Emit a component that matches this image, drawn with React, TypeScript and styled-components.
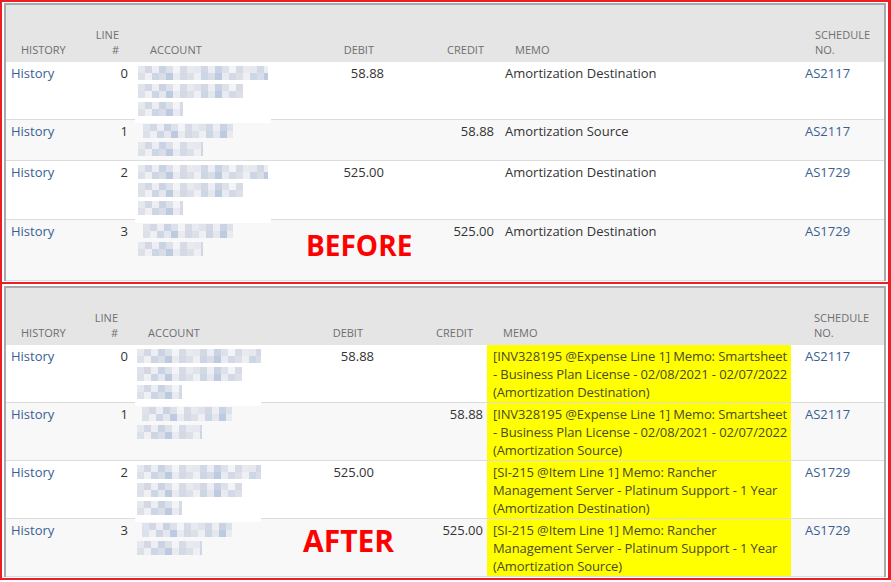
import React from 'react';
import styled, { createGlobalStyle } from 'styled-components';

const Global = createGlobalStyle`
  *, *::before, *::after { box-sizing: border-box; }
  html, body { margin: 0; padding: 0; background: #fff; }
  body { font-family: "Open Sans", "Liberation Sans", sans-serif; }
`;

const Page = styled.div`
  width: 891px;
  height: 582px;
  display: flex;
  flex-direction: column;
  overflow: hidden;
  background: #fff;
`;

const Panel = styled.section<{ $first?: boolean }>`
  position: relative;
  border: solid #ee1c24;
  border-width: ${(p) => (p.$first ? '2px 3px 2px 2px' : '0 3px 2px 2px')};
  padding: ${(p) => (p.$first ? '1px 2px 1px 2px' : '2px 2px 1px 2px')};
`;

const Frame = styled.div`
  border: 2px solid #a9a9a9;
  border-bottom: 0;
`;

const HeaderRow = styled.div<{ $cols: string }>`
  display: grid;
  grid-template-columns: ${(p) => p.$cols};
  height: 57px;
  background: #e5e5e5;
`;

const HeadCell = styled.div<{ $align: string; $pad: number }>`
  display: flex;
  flex-direction: column;
  justify-content: flex-end;
  align-items: ${(p) => (p.$align === 'right' ? 'flex-end' : 'flex-start')};
  text-align: ${(p) => p.$align};
  padding: 0 ${(p) => p.$pad}px 5px;
  font-size: 11px;
  line-height: 15px;
  color: #6f6f6f;
  text-transform: uppercase;
  white-space: nowrap;
`;

const Row = styled.div<{ $cols: string; $alt: boolean; $h: number }>`
  display: grid;
  grid-template-columns: ${(p) => p.$cols};
  min-height: ${(p) => p.$h}px;
  background: ${(p) => (p.$alt ? '#f8f8f8' : '#ffffff')};
  border-bottom: 1px solid #dcdcdc;
`;

const Cell = styled.div<{ $align: string; $pad: number; $mark?: boolean }>`
  padding: 2px ${(p) => p.$pad}px 1px;
  font-size: 13px;
  line-height: 18px;
  text-align: ${(p) => p.$align};
  white-space: nowrap;
  background: ${(p) => (p.$mark ? '#ffff00' : 'transparent')};
  color: ${(p) => (p.$mark ? '#4a4a2a' : '#333333')};
  letter-spacing: ${(p) => (p.$mark ? '-0.1px' : '0')};
`;

const AccountCell = styled.div<{ $pad: number; $paper: boolean }>`
  position: relative;
  z-index: 1;
  margin: 0 4px ${(p) => (p.$paper ? '-4px' : '0')} 2px;
  padding: 2px 0 1px ${(p) => p.$pad - 2}px;
  background: ${(p) => (p.$paper ? '#ffffff' : 'transparent')};
  display: flex;
  flex-direction: column;
`;

const LinkText = styled.span`
  color: #3a5e93;
`;

const MosaicLine = styled.div`
  height: 18px;
  display: flex;
  align-items: center;
`;

const Strip = styled.div<{ $w: number; $off: number; $v: number }>`
  width: ${(p) => p.$w}px;
  margin-left: ${(p) => p.$off}px;
  height: 14px;
  filter: blur(0.6px);
  background:
    repeating-linear-gradient(
      90deg,
      ${(p) => (p.$v ? '#dfe3eb' : '#e6e8ef')} 0 7px,
      #d3d8e4 7px 14px,
      #eceef3 14px 21px,
      #c9d3e3 21px 28px,
      #dde1ea 28px 35px,
      #f3f4f7 35px 42px,
      #d6dbe6 42px 49px,
      #e8eaf0 49px 56px
    ) 0 0 / 100% 7px no-repeat,
    repeating-linear-gradient(
      90deg,
      #dce0e9 0 7px,
      #eef0f4 7px 14px,
      #cdd6e5 14px 21px,
      ${(p) => (p.$v ? '#e4e7ee' : '#d9dde7')} 21px 28px,
      #bccbe0 28px 35px,
      #e9ebf1 35px 42px,
      #d4d9e5 42px 49px
    ) 0 7px / 100% 7px no-repeat;
`;

const Stamp = styled.div<{ $top: number; $left: number; $size: number }>`
  position: absolute;
  z-index: 2;
  top: ${(p) => p.$top}px;
  left: ${(p) => p.$left}px;
  font-family: "Open Sans", "Liberation Sans", sans-serif;
  font-weight: 700;
  font-size: ${(p) => p.$size}px;
  line-height: 1;
  color: #ff0000;
  pointer-events: none;
`;

type Col = { key: string; head: string[]; align: 'left' | 'right'; w: number; pad: number; hpad: number };

type Line = {
  line: number;
  acct: [number, number][];
  debit?: string;
  credit?: string;
  memo: string[];
  sched: string;
  h: number;
};

const topCols: Col[] = [
  { key: 'history', head: ['History'], align: 'left', w: 84, pad: 5, hpad: 15 },
  { key: 'line', head: ['Line', '#'], align: 'right', w: 43, pad: 5, hpad: 14 },
  { key: 'account', head: ['Account'], align: 'left', w: 142, pad: 5, hpad: 17 },
  { key: 'debit', head: ['Debit'], align: 'right', w: 114, pad: 5, hpad: 15 },
  { key: 'credit', head: ['Credit'], align: 'right', w: 110, pad: 5, hpad: 15 },
  { key: 'memo', head: ['Memo'], align: 'left', w: 301, pad: 6, hpad: 16 },
  { key: 'sched', head: ['Schedule', 'No.'], align: 'left', w: 84, pad: 5, hpad: 15 },
];

const bottomCols: Col[] = [
  { key: 'history', head: ['History'], align: 'left', w: 84, pad: 5, hpad: 15 },
  { key: 'line', head: ['Line', '#'], align: 'right', w: 43, pad: 5, hpad: 15 },
  { key: 'account', head: ['Account'], align: 'left', w: 132, pad: 4, hpad: 15 },
  { key: 'debit', head: ['Debit'], align: 'right', w: 114, pad: 5, hpad: 16 },
  { key: 'credit', head: ['Credit'], align: 'right', w: 108, pad: 4, hpad: 14 },
  { key: 'memo', head: ['Memo'], align: 'left', w: 304, pad: 6, hpad: 16 },
  { key: 'sched', head: ['Schedule', 'No.'], align: 'left', w: 93, pad: 14, hpad: 23 },
];

const longAcct: [number, number][] = [
  [0, 130],
  [0, 105],
  [0, 45],
];
const shortAcct: [number, number][] = [
  [5, 90],
  [0, 65],
];

const topRows: Line[] = [
  { line: 0, acct: longAcct, debit: '58.88', memo: ['Amortization Destination'], sched: 'AS2117', h: 58 },
  { line: 1, acct: shortAcct, credit: '58.88', memo: ['Amortization Source'], sched: 'AS2117', h: 41 },
  { line: 2, acct: longAcct, debit: '525.00', memo: ['Amortization Destination'], sched: 'AS1729', h: 59 },
  { line: 3, acct: shortAcct, credit: '525.00', memo: ['Amortization Destination'], sched: 'AS1729', h: 61 },
];

const bottomRows: Line[] = [
  {
    line: 0,
    acct: longAcct,
    debit: '58.88',
    memo: [
      '[INV328195 @Expense Line 1] Memo: Smartsheet',
      '- Business Plan License - 02/08/2021 - 02/07/2022',
      '(Amortization Destination)',
    ],
    sched: 'AS2117',
    h: 58,
  },
  {
    line: 1,
    acct: shortAcct,
    credit: '58.88',
    memo: [
      '[INV328195 @Expense Line 1] Memo: Smartsheet',
      '- Business Plan License - 02/08/2021 - 02/07/2022',
      '(Amortization Source)',
    ],
    sched: 'AS2117',
    h: 58,
  },
  {
    line: 2,
    acct: longAcct,
    debit: '525.00',
    memo: [
      '[SI-215 @Item Line 1] Memo: Rancher',
      'Management Server - Platinum Support - 1 Year',
      '(Amortization Destination)',
    ],
    sched: 'AS1729',
    h: 58,
  },
  {
    line: 3,
    acct: shortAcct,
    credit: '525.00',
    memo: [
      '[SI-215 @Item Line 1] Memo: Rancher',
      'Management Server - Platinum Support - 1 Year',
      '(Amortization Source)',
    ],
    sched: 'AS1729',
    h: 58,
  },
];

function Lines({ items }: { items: string[] }) {
  return (
    <>
      {items.map((t, i) => (
        <React.Fragment key={i}>
          {i > 0 && <br />}
          {t}
        </React.Fragment>
      ))}
    </>
  );
}

function Table({ cols, rows, highlight }: { cols: Col[]; rows: Line[]; highlight?: boolean }) {
  const template = cols.map((c) => `${c.w}px`).join(' ');
  const byKey = (k: string) => cols.find((c) => c.key === k)!;
  return (
    <Frame>
      <HeaderRow $cols={template}>
        {cols.map((c) => (
          <HeadCell key={c.key} $align={c.align} $pad={c.hpad}>
            <Lines items={c.head} />
          </HeadCell>
        ))}
      </HeaderRow>
      {rows.map((r, i) => {
        const cell = (k: string, content: React.ReactNode, mark?: boolean) => {
          const c = byKey(k);
          return (
            <Cell $align={c.align} $pad={c.pad} $mark={mark}>
              {content}
            </Cell>
          );
        };
        return (
          <Row key={r.line} $cols={template} $alt={i % 2 === 1} $h={r.h}>
            {cell('history', <LinkText>History</LinkText>)}
            {cell('line', r.line)}
            <AccountCell $pad={byKey('account').pad} $paper={i % 2 === 0}>
              {r.acct.map(([off, w], j) => (
                <MosaicLine key={j}>
                  <Strip $off={off} $w={w} $v={(j + i) % 2} />
                </MosaicLine>
              ))}
            </AccountCell>
            {cell('debit', r.debit ?? '')}
            {cell('credit', r.credit ?? '')}
            {cell('memo', <Lines items={r.memo} />, highlight)}
            {cell('sched', <LinkText>{r.sched}</LinkText>)}
          </Row>
        );
      })}
    </Frame>
  );
}

export default function App() {
  return (
    <Page>
      <Global />
      <Panel $first>
        <Table cols={topCols} rows={topRows} />
        <Stamp $top={229} $left={304} $size={28}>
          BEFORE
        </Stamp>
      </Panel>
      <Panel>
        <Table cols={bottomCols} rows={bottomRows} highlight />
        <Stamp $top={242} $left={301} $size={30}>
          AFTER
        </Stamp>
      </Panel>
    </Page>
  );
}
